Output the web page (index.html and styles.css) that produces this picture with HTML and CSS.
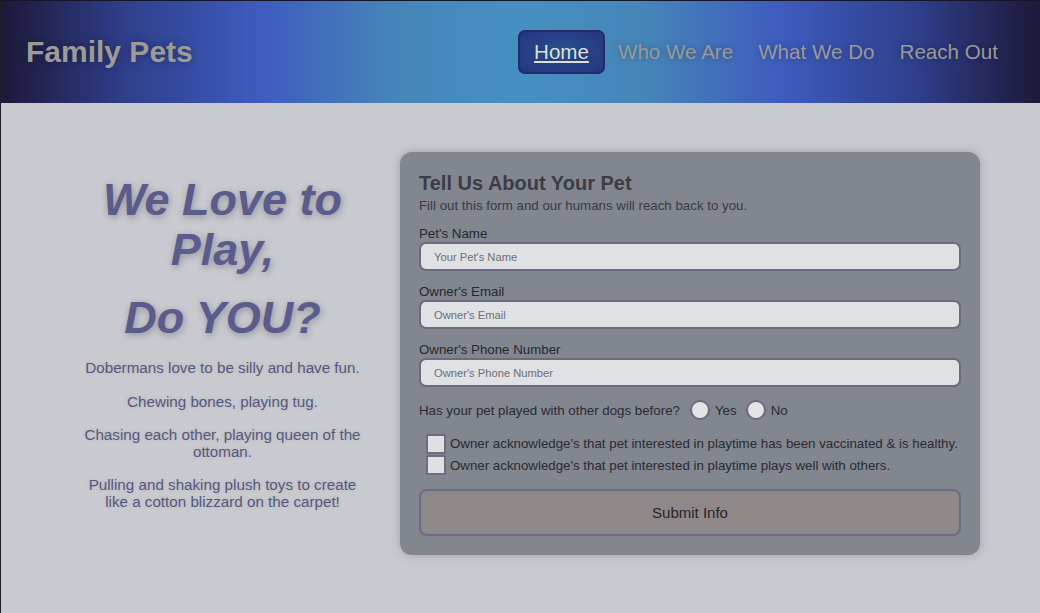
FILE: index.html
```html
<!DOCTYPE html>
<html lang="en">
<head>
<meta charset="utf-8">
<title>Family Pets</title>
<link rel="stylesheet" href="styles.css">
</head>
<body>
<header class="site-header">
  <div class="brand">Family Pets</div>
  <nav class="nav">
    <a href="#" class="nav-link active">Home</a>
    <a href="#" class="nav-link">Who We Are</a>
    <a href="#" class="nav-link">What We Do</a>
    <a href="#" class="nav-link">Reach Out</a>
  </nav>
</header>
<main class="main">
  <section class="intro">
    <h1 class="intro-title">We Love to Play,</h1>
    <h1 class="intro-title second">Do YOU?</h1>
    <p>Dobermans love to be silly and have fun.</p>
    <p>Chewing bones, playing tug.</p>
    <p>Chasing each other, playing queen of the ottoman.</p>
    <p>Pulling and shaking plush toys to create like a cotton blizzard on the carpet!</p>
  </section>
  <form class="card">
    <h2 class="card-title">Tell Us About Your Pet</h2>
    <p class="card-sub">Fill out this form and our humans will reach back to you.</p>
    <label class="field-label" for="pet">Pet's Name</label>
    <input class="field" id="pet" type="text" placeholder="Your Pet's Name">
    <label class="field-label" for="email">Owner's Email</label>
    <input class="field" id="email" type="text" placeholder="Owner's Email">
    <label class="field-label" for="phone">Owner's Phone Number</label>
    <input class="field" id="phone" type="text" placeholder="Owner's Phone Number">
    <div class="radio-row">
      <span>Has your pet played with other dogs before?</span>
      <label class="radio-opt"><input type="radio" name="played" class="radio"> Yes</label>
      <label class="radio-opt"><input type="radio" name="played" class="radio"> No</label>
    </div>
    <div class="checks">
      <label class="check-row"><input type="checkbox" class="check"> Owner acknowledge's that pet interested in playtime has been vaccinated &amp; is healthy.</label>
      <label class="check-row"><input type="checkbox" class="check"> Owner acknowledge's that pet interested in playtime plays well with others.</label>
    </div>
    <button type="button" class="submit">Submit Info</button>
  </form>
</main>
</body>
</html>
```
FILE: styles.css
```css
* { box-sizing: border-box; }
html, body { margin: 0; padding: 0; }
body {
  font-family: "Liberation Sans", Arial, sans-serif;
  background: #c8cacf;
  min-height: 613px;
  border-left: 1px solid #1d1f2a;
}
.site-header {
  height: 103px;
  border-top: 1px solid #16162a;
  background: linear-gradient(to right, #1d1838 0%, #2f3f8c 12%, #3e5cbe 25%, #4685b8 38%, #4590c2 50%, #4685b8 62%, #3e5cbe 75%, #2f3f8c 88%, #1d1838 100%);
  display: flex;
  align-items: center;
  justify-content: space-between;
  padding: 0 30px 0 25px;
}
.brand {
  font-size: 30px;
  font-weight: bold;
  color: #9d9b98;
  text-shadow: 0 0 8px rgba(0,0,0,0.35);
}
.nav { display: flex; align-items: center; gap: 1px; }
.nav-link {
  font-size: 20.6px;
  color: #9a999b;
  text-decoration: none;
  padding: 10px 12px;
  text-shadow: 0 0 6px rgba(0,0,0,0.3);
}
.nav-link.active {
  color: #dedede;
  text-decoration: underline;
  padding: 8px 14px;
  border: 2px solid #232c66;
  border-radius: 7px;
  background: radial-gradient(ellipse at center, #2c5c92 0%, #28448a 45%, #243680 100%);
  margin-right: 0;
}
.main {
  display: flex;
  align-items: flex-start;
  padding: 49px 60px 40px 79px;
  gap: 35px;
}
.intro {
  width: 285px;
  text-align: center;
  padding-top: 23px;
  color: #57577e;
}
.intro-title {
  margin: 0;
  font-size: 45px;
  line-height: 50px;
  font-style: italic;
  font-weight: bold;
  color: #5b5b8c;
  text-shadow: 1px 2px 7px rgba(40,40,60,0.35);
}
.intro-title.second { margin-top: 18px; margin-bottom: 17px; }
.intro p {
  margin: 0 0 17px;
  font-size: 15.2px;
  line-height: 16.5px;
  text-shadow: 0 0 4px rgba(0,0,0,0.12);
}
.card {
  width: 580px;
  background: #82868f;
  border-radius: 12px;
  padding: 20px 19px 19px 19px;
  box-shadow: 0 0 10px rgba(60,60,70,0.3);
  display: flex;
  flex-direction: column;
  color: #2a2a33;
}
.card-title {
  margin: 0 0 0 0;
  font-size: 20px;
  line-height: 22px;
  color: #3c3c45;
}
.card-sub {
  margin: 4px 0 0 0;
  font-size: 13.3px;
  line-height: 15px;
  color: #3a3a44;
}
.field-label {
  font-size: 13.3px;
  line-height: 15px;
  margin: 13px 0 1px 0;
  color: #26262f;
}
.field {
  height: 29px;
  width: 100%;
  border: 2px solid #6b6a80;
  border-radius: 7px;
  background: #e0e1e4;
  padding: 0 13px;
  font-family: "Liberation Sans", Arial, sans-serif;
  font-size: 11.2px;
  outline: none;
}
.field::placeholder { color: #6d6d72; }
.radio-row {
  display: flex;
  align-items: center;
  margin: 12px 0 0 0;
  font-size: 13.3px;
  height: 22px;
}
.radio-opt {
  display: flex;
  align-items: center;
  margin-left: 10px;
}
.radio {
  appearance: none;
  -webkit-appearance: none;
  width: 20px;
  height: 20px;
  margin: 0 5px 0 0;
  border-radius: 50%;
  border: 2px solid #6c6b7e;
  background: #e3e3e6;
}
.radio-opt + .radio-opt { margin-left: 9px; }
.checks {
  margin: 13px 0 0 7px;
  display: flex;
  flex-direction: column;
  gap: 2px;
}
.check-row {
  display: flex;
  align-items: center;
  font-size: 13.3px;
  height: 19.5px;
  color: #2a2a33;
}
.check {
  appearance: none;
  -webkit-appearance: none;
  width: 20px;
  height: 20px;
  margin: 0 4px 0 0;
  border: 2px solid #6e6d80;
  border-radius: 1px;
  background: #e0e0e2;
}
.submit {
  margin-top: 14px;
  height: 47px;
  width: 100%;
  border: 2px solid #6c6b84;
  border-radius: 8px;
  background: #8f8889;
  font-family: "Liberation Sans", Arial, sans-serif;
  font-size: 15px;
  color: #26262c;
}
```
